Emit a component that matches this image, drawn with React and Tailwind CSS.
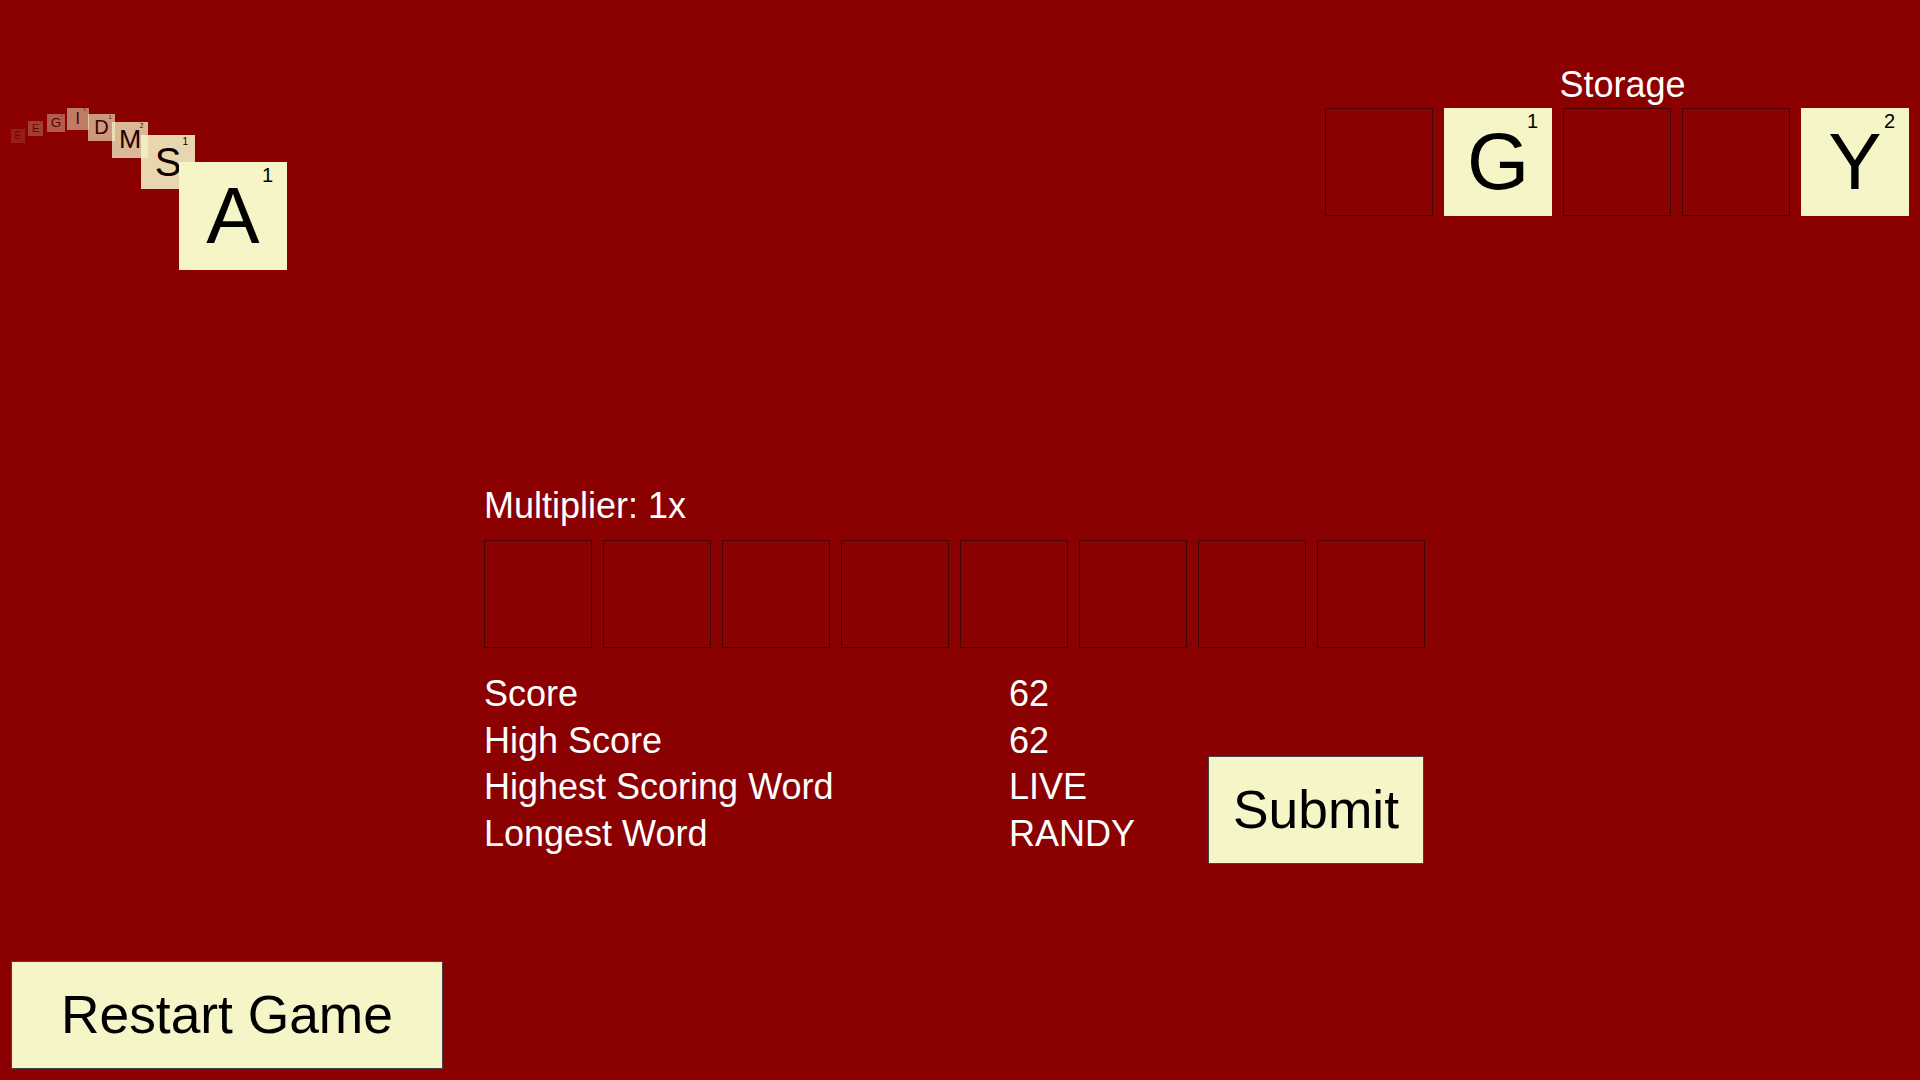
const TILE_BG = "bg-[#F5F5C8]";

function Slot() {
  return <div className="w-[108px] h-[108px] border border-black/50" />;
}

function BigTile({ letter, value }) {
  return (
    <div className={`relative w-[108px] h-[108px] ${TILE_BG} flex items-center justify-center text-black`}>
      <span className="text-[80px] leading-[92px]">{letter}</span>
      <span className="absolute top-[2px] right-[14px] text-[20px] leading-[23px]">{value}</span>
    </div>
  );
}

// falling tile trail, each step is 1/n the size of the current tile
function Trail() {
  return (
    <div className="absolute inset-0 pointer-events-none text-black">
      <div className={`absolute left-[11px] top-[129px] w-[13.5px] h-[13.5px] ${TILE_BG} opacity-[0.125] flex items-center justify-center`}>
        <span className="text-[10px] leading-[11.5px]">E</span>
        <span className="absolute top-[0.25px] right-[1.75px] text-[2.5px] leading-[3px]">1</span>
      </div>
      <div className={`absolute left-[28px] top-[121px] w-[15.43px] h-[15.43px] ${TILE_BG} opacity-[0.25] flex items-center justify-center`}>
        <span className="text-[11.43px] leading-[13.1px]">E</span>
        <span className="absolute top-[0.3px] right-[2px] text-[2.86px] leading-[3.3px]">1</span>
      </div>
      <div className={`absolute left-[47px] top-[114px] w-[18px] h-[18px] ${TILE_BG} opacity-[0.375] flex items-center justify-center`}>
        <span className="text-[13.33px] leading-[15.3px]">G</span>
        <span className="absolute top-[0.33px] right-[2.33px] text-[3.33px] leading-[3.8px]">1</span>
      </div>
      <div className={`absolute left-[67px] top-[108px] w-[21.6px] h-[21.6px] ${TILE_BG} opacity-[0.5] flex items-center justify-center`}>
        <span className="text-[16px] leading-[18.4px]">I</span>
        <span className="absolute top-[0.4px] right-[2.8px] text-[4px] leading-[4.6px]">1</span>
      </div>
      <div className={`absolute left-[88px] top-[114px] w-[27px] h-[27px] ${TILE_BG} opacity-[0.625] flex items-center justify-center`}>
        <span className="text-[20px] leading-[23px]">D</span>
        <span className="absolute top-[0.5px] right-[3.5px] text-[5px] leading-[5.75px]">1</span>
      </div>
      <div className={`absolute left-[112px] top-[121.5px] w-[36px] h-[36px] ${TILE_BG} opacity-[0.75] flex items-center justify-center`}>
        <span className="text-[26.67px] leading-[30.7px]">M</span>
        <span className="absolute top-[0.67px] right-[4.67px] text-[6.67px] leading-[7.7px]">2</span>
      </div>
      <div className={`absolute left-[141px] top-[135px] w-[54px] h-[54px] ${TILE_BG} opacity-[0.875] flex items-center justify-center`}>
        <span className="text-[40px] leading-[46px]">S</span>
        <span className="absolute top-[1px] right-[7px] text-[10px] leading-[11.5px]">1</span>
      </div>
      <div className="absolute left-[179px] top-[162px]">
        <BigTile letter="A" value="1" />
      </div>
    </div>
  );
}

export default function App() {
  const stats = [
    ["Score", "62"],
    ["High Score", "62"],
    ["Highest Scoring Word", "LIVE"],
    ["Longest Word", "RANDY"],
  ];

  return (
    <div className="relative h-[1080px] w-full overflow-hidden bg-[#8B0000] text-white font-['Liberation_Sans',Arial,sans-serif] flex flex-col">
      <Trail />

      {/* storage */}
      <div className="flex justify-end pt-[65px] pr-[11px]">
        <div className="flex flex-col">
          <div className="text-center pl-[11px] text-[36px] leading-[40px] mb-[3px]">Storage</div>
          <div className="flex gap-[11px]">
            <Slot />
            <BigTile letter="G" value="1" />
            <Slot />
            <Slot />
            <BigTile letter="Y" value="2" />
          </div>
        </div>
      </div>

      {/* board */}
      <div className="mt-[270px] pl-[484px]">
        <div className="w-[941px]">
          <div className="text-[36px] leading-[40px]">Multiplier: 1x</div>
          <div className="mt-[14px] flex gap-[11px]">
            <Slot />
            <Slot />
            <Slot />
            <Slot />
            <Slot />
            <Slot />
            <Slot />
            <Slot />
          </div>

          <div className="mt-[23px] flex items-start">
            <div className="grid grid-cols-[525px_199px] text-[36px] leading-[46.67px]">
              {stats.map(([label, value]) => (
                <div key={label} className="contents">
                  <div>{label}</div>
                  <div>{value}</div>
                </div>
              ))}
            </div>
            <button className="mt-[85px] w-[216px] h-[108px] bg-[#F5F5C8] border border-[#444] text-black text-[53.33px] flex items-center justify-center">
              Submit
            </button>
          </div>
        </div>
      </div>

      <button className="mt-auto mb-[11px] ml-[11px] w-[432px] h-[108px] bg-[#F5F5C8] border border-[#444] text-black text-[53.33px] flex items-center justify-center">
        Restart Game
      </button>
    </div>
  );
}
